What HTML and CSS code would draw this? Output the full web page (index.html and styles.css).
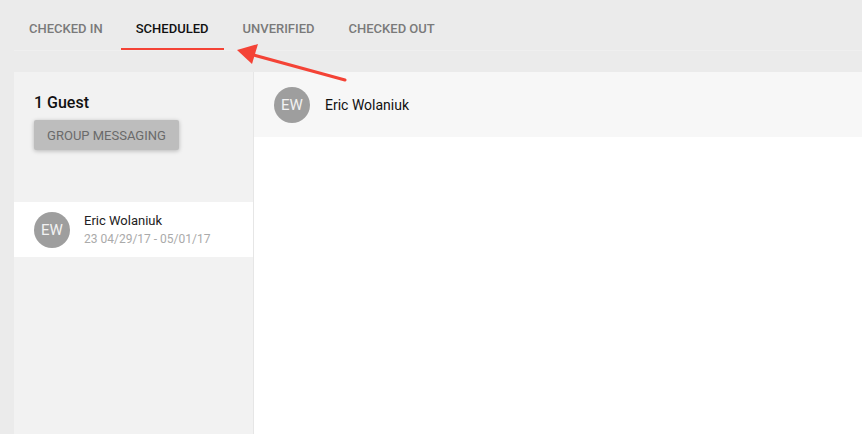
FILE: index.html
```html
<!DOCTYPE html>
<html>
<head>
<meta charset="utf-8">
<link rel="stylesheet" href="styles.css">
</head>
<body>
<div class="page">
  <nav class="tabs">
    <div class="tab first">Checked In</div>
    <div class="tab active">Scheduled</div>
    <div class="tab">Unverified</div>
    <div class="tab">Checked Out</div>
  </nav>
  <main class="content">
    <aside class="sidebar">
      <div class="sidebar-head">
        <h2 class="count">1 Guest</h2>
        <button class="group-btn">Group Messaging</button>
      </div>
      <div class="guest">
        <div class="avatar">EW</div>
        <div class="guest-info">
          <div class="guest-name">Eric Wolaniuk</div>
          <div class="guest-dates">23 04/29/17 - 05/01/17</div>
        </div>
      </div>
    </aside>
    <section class="detail">
      <div class="detail-head">
        <div class="avatar">EW</div>
        <div class="detail-name">Eric Wolaniuk</div>
      </div>
    </section>
  </main>
  <svg class="arrow" width="862" height="434" viewBox="0 0 862 434">
    <line x1="345" y1="80" x2="250" y2="54" stroke="#f44336" stroke-width="3" stroke-linecap="round"/>
    <polygon points="237,50 258,44 252,64" fill="#f44336"/>
  </svg>
</div>
</body>
</html>
```
FILE: styles.css
```css
* { box-sizing: border-box; }
html, body { margin: 0; padding: 0; }
body {
  font-family: Roboto, "Liberation Sans", sans-serif;
  background: #ebebeb;
  width: 862px;
  height: 434px;
  overflow: hidden;
}
.page {
  position: relative;
  width: 862px;
  height: 434px;
  display: flex;
  flex-direction: column;
}
.tabs {
  display: flex;
  margin-left: 14px;
  height: 51px;
  border-bottom: 1px solid #efefef;
}
.tab {
  padding: 0 15px;
  height: 50px;
  line-height: 58px;
  font-size: 13px;
  font-weight: 500;
  text-transform: uppercase;
  color: #7a7a7a;
  margin-right: 4px;
}
.tab.first { margin-right: 3px; }
.tab.active {
  color: #111;
  border-bottom: 2px solid #f44336;
}
.content {
  display: flex;
  flex: 1;
  margin-top: 21px;
  margin-left: 14px;
}
.sidebar {
  width: 240px;
  background: #f2f2f2;
  border-right: 1px solid #e6e6e6;
}
.sidebar-head {
  padding: 22px 20px 0 20px;
  height: 130px;
}
.count {
  margin: 0;
  font-size: 16px;
  font-weight: 500;
  color: #111;
  line-height: 18px;
}
.group-btn {
  margin-top: 8px;
  width: 145px;
  height: 30px;
  border: none;
  border-radius: 2px;
  background: #bdbdbd;
  color: #6a6a6a;
  font-family: Roboto, "Liberation Sans", sans-serif;
  font-size: 13px;
  text-transform: uppercase;
  box-shadow: 0 1px 4px rgba(0,0,0,0.25);
  padding: 0;
}
.guest {
  display: flex;
  align-items: center;
  height: 55px;
  background: #fff;
  padding-left: 20px;
}
.avatar {
  width: 36px;
  height: 36px;
  border-radius: 50%;
  background: #9e9e9e;
  color: #f2f2f2;
  font-size: 15px;
  display: flex;
  align-items: center;
  justify-content: center;
  flex-shrink: 0;
}
.guest-info { margin-left: 14px; margin-top: 1px; }
.guest-name { font-size: 13px; color: #222; line-height: 18px; }
.guest-dates { font-size: 12px; color: #aaa; line-height: 18px; }
.detail {
  flex: 1;
  background: #fff;
}
.detail-head {
  height: 65px;
  background: #f7f7f7;
  display: flex;
  align-items: center;
  padding-left: 20px;
}
.detail-name {
  margin-left: 15px;
  font-size: 14px;
  color: #111;
}
.arrow {
  position: absolute;
  left: 0;
  top: 0;
  pointer-events: none;
}
```
